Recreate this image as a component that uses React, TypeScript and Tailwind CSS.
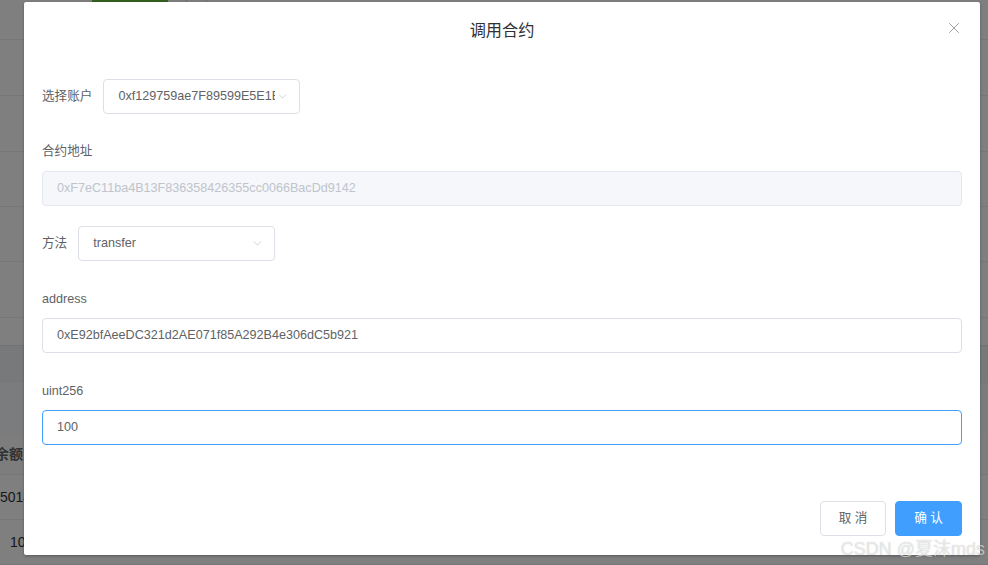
import { ChevronDown, X } from 'lucide-react';

const listRows = [38, 56, 56, 55, 55, 56];

function SelectBox({ value }: { value: string }) {
  return (
    <div className="flex items-center h-[35px] w-[197px] overflow-hidden border border-[#dcdfe6] rounded-[4px] bg-white">
      <span className="block w-[157px] shrink-0 overflow-hidden whitespace-nowrap ml-[14px] text-[#606266]">
        {value}
      </span>
      <ChevronDown
        size={13}
        strokeWidth={1.4}
        className="shrink-0 ml-auto mr-[10px] text-[#c0c4cc]"
      />
    </div>
  );
}

function TextInput({
  value,
  disabled,
  focused,
}: {
  value: string;
  disabled?: boolean;
  focused?: boolean;
}) {
  return (
    <div
      className={`flex items-center h-[35px] w-full rounded-[4px] border px-[14px] ${
        disabled
          ? 'bg-[#f5f7fa] border-[#e4e7ed] text-[#c0c4cc]'
          : focused
          ? 'bg-white border-[#409eff] text-[#606266]'
          : 'bg-white border-[#dcdfe6] text-[#606266]'
      }`}
    >
      {value}
    </div>
  );
}

export default function App() {
  return (
    <div className="relative w-[988px] h-[565px] overflow-hidden bg-white font-['Liberation_Sans','Noto_Sans_CJK_SC',sans-serif] text-[12.6px]">
      {/* Page behind the dialog */}
      <div className="flex flex-col h-full">
        {/* toolbar bottom edge */}
        <div className="flex h-[2px] shrink-0">
          <div className="ml-[92px] w-[76px] h-full bg-[#67c23a]" />
          <div className="ml-[18px] w-px h-full bg-[#dcdfe6]" />
          <div className="ml-[19px] w-px h-full bg-[#dcdfe6]" />
        </div>

        {/* account list */}
        <div className="flex flex-col shrink-0">
          {listRows.map((h, i) => (
            <div
              key={i}
              className="border-b border-[#ebeef5]"
              style={{ height: h }}
            />
          ))}
        </div>

        <div className="h-[27px] shrink-0 bg-white" />
        <div className="h-[38px] shrink-0 bg-[#f0f2f5] border-t border-[#e4e7ed]" />

        {/* balance table */}
        <div className="flex flex-col shrink-0 bg-white">
          <div className="h-[52px] bg-[#f7f8fa]" />
          <div className="h-[40px] flex items-center border-b border-[#ebeef5] bg-[#fafafa] text-[#606266] text-[14px] -ml-[5px] font-bold">
            余额 (ETH)
          </div>
          <div className="h-[45px] flex items-center border-b border-[#ebeef5] text-[#303133] text-[14px]">
            5014.99
          </div>
          <div className="h-[45px] flex items-center pl-[10px] border-b border-[#ebeef5] text-[#303133] text-[14px]">
            10
          </div>
        </div>
      </div>

      {/* Mask */}
      <div className="absolute inset-0 bg-black/50" />

      {/* Dialog */}
      <div className="absolute left-[24px] top-[2px] w-[956px] h-[553px] bg-white rounded-[2px] shadow-[0_1px_3px_rgba(0,0,0,0.3)] flex flex-col">
        <div className="relative pt-[16px]">
          <div className="text-center text-[16.2px] leading-[24px] text-[#303133]">
            调用合约
          </div>
          <button className="absolute right-[17px] top-[17px] text-[#909399]">
            <X size={18} strokeWidth={1.2} />
          </button>
        </div>

        <div className="flex flex-col px-[18px] pt-[37px]">
          <div className="flex items-center">
            <span className="mr-[11px] text-[#606266]">选择账户</span>
            <SelectBox value="0xf129759ae7F89599E5E1B3d2A4c8E0f5a61C7D99" />
          </div>

          <div className="mt-[27px] leading-[20px] text-[#606266]">合约地址</div>
          <div className="mt-[10px]">
            <TextInput value="0xF7eC11ba4B13F836358426355cc0066BacDd9142" disabled />
          </div>

          <div className="flex items-center mt-[20px]">
            <span className="mr-[11px] text-[#606266]">方法</span>
            <SelectBox value="transfer" />
          </div>

          <div className="mt-[28px] leading-[20px] text-[#606266]">address</div>
          <div className="mt-[9px]">
            <TextInput value="0xE92bfAeeDC321d2AE071f85A292B4e306dC5b921" />
          </div>

          <div className="mt-[28px] leading-[20px] text-[#606266]">uint256</div>
          <div className="mt-[9px]">
            <TextInput value="100" focused />
          </div>
        </div>

        <div className="mt-auto flex justify-end gap-[9px] px-[18px] pb-[19px]">
          <button className="h-[35px] w-[66px] rounded-[4px] border border-[#dcdfe6] bg-white text-[#606266]">
            取 消
          </button>
          <button className="h-[35px] w-[67px] rounded-[4px] border border-[#409eff] bg-[#409eff] text-white">
            确 认
          </button>
        </div>
      </div>

      {/* Watermark */}
      <div className="absolute right-[3px] bottom-[6px] text-[18px] leading-[20px] text-white/60 [text-shadow:0_0_1px_rgba(0,0,0,0.25)] pointer-events-none">
        CSDN @夏沫mds
      </div>
    </div>
  );
}
